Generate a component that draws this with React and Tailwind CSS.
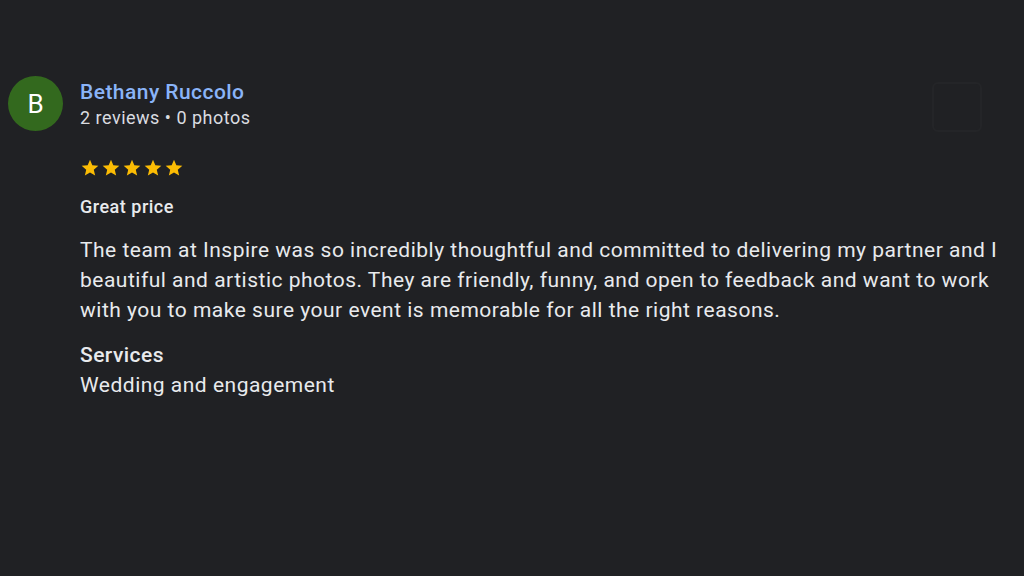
function StarIcon() {
  return (
    <svg width="20" height="20" viewBox="0 0 24 24" fill="#fbbc04">
      <path d="M12 17.27L18.18 21l-1.64-7.03L22 9.24l-7.19-.61L12 2 9.19 8.63 2 9.24l5.46 4.73L5.82 21z" />
    </svg>
  );
}

export default function App() {
  return (
    <div
      className="w-[1024px] h-[576px] bg-[#202124] text-[#e8eaed] overflow-hidden"
      style={{ fontFamily: "Roboto, 'Noto Sans', sans-serif" }}
    >
      <div className="flex pt-[76px] pl-[8px] pr-[20px]">
        {/* AVATAR */}
        <div className="w-[55px] h-[55px] rounded-full bg-[#33691e] flex items-center justify-center shrink-0 text-white text-[26px] leading-none">
          B
        </div>

        <div className="flex-1 ml-[17px]">
          {/* HEADER */}
          <div className="flex justify-between">
            <div>
              <div className="text-[21px] leading-[28px] font-medium tracking-[0.45px] text-[#8ab4f8] mt-[2px]">
                Bethany Ruccolo
              </div>
              <div className="text-[18px] leading-[24px] tracking-[0.5px] text-[#dadce0]">
                2 reviews • 0 photos
              </div>
            </div>
            <div className="w-[50px] h-[50px] mt-[6px] mr-[22px] rounded-md border-2 border-[#242528]"></div>
          </div>

          {/* STARS */}
          <div className="flex gap-[1px] mt-[26px]">
            {[0, 1, 2, 3, 4].map((i) => (
              <StarIcon key={i} />
            ))}
          </div>

          <div className="text-[18px] leading-[24px] font-medium tracking-[0.5px] mt-[17px]">
            Great price
          </div>

          {/* BODY */}
          <p className="text-[21px] leading-[30px] tracking-[0.5px] mt-[16px]">
            The team at Inspire was so incredibly thoughtful and committed to delivering my partner and I
            beautiful and artistic photos. They are friendly, funny, and open to feedback and want to work
            with you to make sure your event is memorable for all the right reasons.
          </p>

          <div className="mt-[15px] text-[21px] leading-[30px] font-medium tracking-[0.45px]">
            Services
          </div>
          <div className="text-[21px] leading-[30px] tracking-[0.5px]">Wedding and engagement</div>
        </div>
      </div>
    </div>
  );
}
